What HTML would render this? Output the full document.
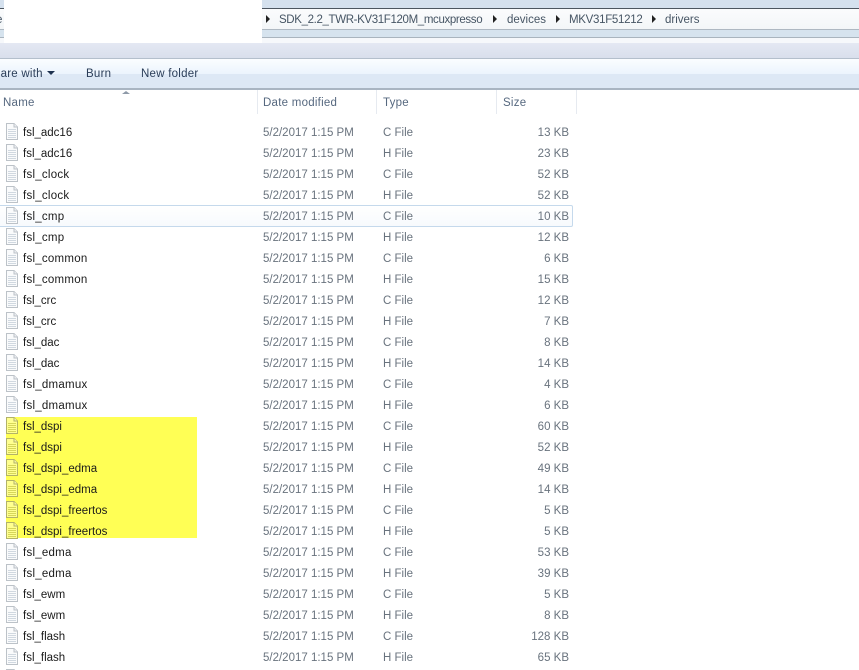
<!DOCTYPE html>
<html lang="en">
<head>
<meta charset="utf-8">
<title>drivers</title>
<style>
html,body{margin:0;padding:0;background:#fff}
#p{position:relative;width:859px;height:670px;overflow:hidden;background:#fff;font-family:"Liberation Sans",sans-serif;font-size:11.5px;color:#000}
#p div,#p span,#p svg{position:absolute}
.t{white-space:nowrap;line-height:14px}
.g{color:#69737e}
.h{color:#56687f;letter-spacing:.25px}
.n{color:#1a1a1a}
.w{letter-spacing:.25px}
.s{width:65px;text-align:right}
.bc{color:#465564;top:13px;font-size:11.5px}
.ar{width:0;height:0;border-left:4px solid #222;border-top:4px solid transparent;border-bottom:4px solid transparent;top:15px}
.sep{top:90px;width:1px;height:24px;background:#e6eaf0}
.tb{color:#2a3d58;letter-spacing:.25px;top:67px}
</style>
</head>
<body>
<div id="p">
<div style="left:0;top:0;width:859px;height:8px;background:#d5e1ee"></div>
<div style="left:0;top:8px;width:859px;height:1px;background:#4d5660"></div>
<div style="left:0;top:9px;width:859px;height:20px;background:linear-gradient(#fbfcfd,#f3f6f8)"></div>
<div style="left:0;top:29px;width:859px;height:1px;background:#aeb8c2"></div>
<div style="left:0;top:30px;width:859px;height:7px;background:#d6e3ee"></div>
<div style="left:0;top:37px;width:859px;height:1px;background:#a9b4be"></div>
<div style="left:0;top:38px;width:859px;height:5px;background:#f6f8fb"></div>
<div style="left:0;top:43px;width:859px;height:15px;background:linear-gradient(#e4e8f3,#d9dfec)"></div>
<div style="left:0;top:58px;width:859px;height:1px;background:#b4bfcc"></div>
<div style="left:0;top:59px;width:859px;height:15px;background:linear-gradient(#fbfdff,#ecf4fd)"></div>
<div style="left:0;top:74px;width:859px;height:14px;background:#dde8f5"></div>
<div style="left:0;top:88px;width:859px;height:2px;background:#a9b5c2"></div>

<div style="left:4px;top:0;width:258px;height:43px;background:#fff"></div>
<div class="t bc" style="left:-4px">e</div>

<div class="ar" style="left:266px"></div>
<div class="t bc" style="left:279px;letter-spacing:-.36px">SDK_2.2_TWR-KV31F120M_mcuxpresso</div>
<div class="ar" style="left:493px"></div>
<div class="t bc" style="left:507px">devices</div>
<div class="ar" style="left:556px"></div>
<div class="t bc" style="left:569px;letter-spacing:-.3px">MKV31F51212</div>
<div class="ar" style="left:652px"></div>
<div class="t bc" style="left:665px">drivers</div>

<div class="t tb" style="left:-14px">Share with</div>
<div style="left:47px;top:71px;width:0;height:0;border-top:4px solid #1e3250;border-left:4px solid transparent;border-right:4px solid transparent"></div>
<div class="t tb" style="left:86px">Burn</div>
<div class="t tb" style="left:141px">New folder</div>

<div style="left:122px;top:91px;width:0;height:0;border-bottom:3px solid #8e9aa8;border-left:4px solid transparent;border-right:4px solid transparent"></div>
<div class="sep" style="left:257px"></div>
<div class="sep" style="left:376px"></div>
<div class="sep" style="left:496px"></div>
<div class="sep" style="left:576px"></div>
<div class="t h" style="left:3px;top:96px">Name</div>
<div class="t h" style="left:263px;top:96px">Date modified</div>
<div class="t h" style="left:383px;top:96px">Type</div>
<div class="t h" style="left:503px;top:96px">Size</div>

<div style="left:0;top:205px;width:572px;height:20px;border:1px solid #c5d9ec;border-left:0;border-radius:0 2px 2px 0;background:linear-gradient(#fff,#f7fafd)"></div>
<div style="left:6px;top:417px;width:191px;height:121px;background:#ffff55"></div>

<svg style="left:0;top:0" width="24" height="690" viewBox="0 0 24 690">
<defs>
<g id="f"><path d="M6.500 .5H14L17.500 4V16.500H6.500Z" fill="#fafbfc" stroke="#bcc2c8"/><path d="M14 .5V4H17.500" fill="#eef0f3" stroke="#bcc2c8"/><path d="M8 6.500H16M8 8.500H16M8 10.500H16M8 12.500H16M8 14.500H16" stroke="#d0d8e0"/></g>
<g id="y"><path d="M6.500 .5H14L17.500 4V16.500H6.500Z" fill="#ffff90" stroke="#b2b268"/><path d="M14 .5V4H17.500" fill="#fafaa8" stroke="#b2b268"/><path d="M8 6.500H16M8 8.500H16M8 10.500H16M8 12.500H16M8 14.500H16" stroke="#d6d65a"/></g>
</defs>
<use href="#f" y="123"/><use href="#f" y="144"/><use href="#f" y="165"/><use href="#f" y="186"/><use href="#f" y="207"/><use href="#f" y="228"/><use href="#f" y="249"/><use href="#f" y="270"/><use href="#f" y="291"/><use href="#f" y="312"/><use href="#f" y="333"/><use href="#f" y="354"/><use href="#f" y="375"/><use href="#f" y="396"/>
<use href="#y" y="417"/><use href="#y" y="438"/><use href="#y" y="459"/><use href="#y" y="480"/><use href="#y" y="501"/><use href="#y" y="522"/>
<use href="#f" y="543"/><use href="#f" y="564"/><use href="#f" y="585"/><use href="#f" y="606"/><use href="#f" y="627"/><use href="#f" y="648"/>
<use href="#f" y="669"/>
</svg>

<div class="t n" style="left:23px;top:126px">fsl_adc16</div><div class="t g" style="left:263px;top:126px">5/2/2017 1:15 PM</div><div class="t g" style="left:383px;top:126px">C File</div><div class="t g s" style="left:504px;top:126px">13 KB</div>
<div class="t n" style="left:23px;top:147px">fsl_adc16</div><div class="t g" style="left:263px;top:147px">5/2/2017 1:15 PM</div><div class="t g" style="left:383px;top:147px">H File</div><div class="t g s" style="left:504px;top:147px">23 KB</div>
<div class="t n w" style="left:23px;top:168px">fsl_clock</div><div class="t g" style="left:263px;top:168px">5/2/2017 1:15 PM</div><div class="t g" style="left:383px;top:168px">C File</div><div class="t g s" style="left:504px;top:168px">52 KB</div>
<div class="t n w" style="left:23px;top:189px">fsl_clock</div><div class="t g" style="left:263px;top:189px">5/2/2017 1:15 PM</div><div class="t g" style="left:383px;top:189px">H File</div><div class="t g s" style="left:504px;top:189px">52 KB</div>
<div class="t n w" style="left:23px;top:210px">fsl_cmp</div><div class="t g" style="left:263px;top:210px">5/2/2017 1:15 PM</div><div class="t g" style="left:383px;top:210px">C File</div><div class="t g s" style="left:504px;top:210px">10 KB</div>
<div class="t n w" style="left:23px;top:231px">fsl_cmp</div><div class="t g" style="left:263px;top:231px">5/2/2017 1:15 PM</div><div class="t g" style="left:383px;top:231px">H File</div><div class="t g s" style="left:504px;top:231px">12 KB</div>
<div class="t n w" style="left:23px;top:252px">fsl_common</div><div class="t g" style="left:263px;top:252px">5/2/2017 1:15 PM</div><div class="t g" style="left:383px;top:252px">C File</div><div class="t g s" style="left:504px;top:252px">6 KB</div>
<div class="t n w" style="left:23px;top:273px">fsl_common</div><div class="t g" style="left:263px;top:273px">5/2/2017 1:15 PM</div><div class="t g" style="left:383px;top:273px">H File</div><div class="t g s" style="left:504px;top:273px">15 KB</div>
<div class="t n" style="left:23px;top:294px">fsl_crc</div><div class="t g" style="left:263px;top:294px">5/2/2017 1:15 PM</div><div class="t g" style="left:383px;top:294px">C File</div><div class="t g s" style="left:504px;top:294px">12 KB</div>
<div class="t n" style="left:23px;top:315px">fsl_crc</div><div class="t g" style="left:263px;top:315px">5/2/2017 1:15 PM</div><div class="t g" style="left:383px;top:315px">H File</div><div class="t g s" style="left:504px;top:315px">7 KB</div>
<div class="t n" style="left:23px;top:336px">fsl_dac</div><div class="t g" style="left:263px;top:336px">5/2/2017 1:15 PM</div><div class="t g" style="left:383px;top:336px">C File</div><div class="t g s" style="left:504px;top:336px">8 KB</div>
<div class="t n" style="left:23px;top:357px">fsl_dac</div><div class="t g" style="left:263px;top:357px">5/2/2017 1:15 PM</div><div class="t g" style="left:383px;top:357px">H File</div><div class="t g s" style="left:504px;top:357px">14 KB</div>
<div class="t n w" style="left:23px;top:378px">fsl_dmamux</div><div class="t g" style="left:263px;top:378px">5/2/2017 1:15 PM</div><div class="t g" style="left:383px;top:378px">C File</div><div class="t g s" style="left:504px;top:378px">4 KB</div>
<div class="t n w" style="left:23px;top:399px">fsl_dmamux</div><div class="t g" style="left:263px;top:399px">5/2/2017 1:15 PM</div><div class="t g" style="left:383px;top:399px">H File</div><div class="t g s" style="left:504px;top:399px">6 KB</div>
<div class="t n" style="left:23px;top:420px">fsl_dspi</div><div class="t g" style="left:263px;top:420px">5/2/2017 1:15 PM</div><div class="t g" style="left:383px;top:420px">C File</div><div class="t g s" style="left:504px;top:420px">60 KB</div>
<div class="t n" style="left:23px;top:441px">fsl_dspi</div><div class="t g" style="left:263px;top:441px">5/2/2017 1:15 PM</div><div class="t g" style="left:383px;top:441px">H File</div><div class="t g s" style="left:504px;top:441px">52 KB</div>
<div class="t n" style="left:23px;top:462px">fsl_dspi_edma</div><div class="t g" style="left:263px;top:462px">5/2/2017 1:15 PM</div><div class="t g" style="left:383px;top:462px">C File</div><div class="t g s" style="left:504px;top:462px">49 KB</div>
<div class="t n" style="left:23px;top:483px">fsl_dspi_edma</div><div class="t g" style="left:263px;top:483px">5/2/2017 1:15 PM</div><div class="t g" style="left:383px;top:483px">H File</div><div class="t g s" style="left:504px;top:483px">14 KB</div>
<div class="t n" style="left:23px;top:504px">fsl_dspi_freertos</div><div class="t g" style="left:263px;top:504px">5/2/2017 1:15 PM</div><div class="t g" style="left:383px;top:504px">C File</div><div class="t g s" style="left:504px;top:504px">5 KB</div>
<div class="t n" style="left:23px;top:525px">fsl_dspi_freertos</div><div class="t g" style="left:263px;top:525px">5/2/2017 1:15 PM</div><div class="t g" style="left:383px;top:525px">H File</div><div class="t g s" style="left:504px;top:525px">5 KB</div>
<div class="t n w" style="left:23px;top:546px">fsl_edma</div><div class="t g" style="left:263px;top:546px">5/2/2017 1:15 PM</div><div class="t g" style="left:383px;top:546px">C File</div><div class="t g s" style="left:504px;top:546px">53 KB</div>
<div class="t n w" style="left:23px;top:567px">fsl_edma</div><div class="t g" style="left:263px;top:567px">5/2/2017 1:15 PM</div><div class="t g" style="left:383px;top:567px">H File</div><div class="t g s" style="left:504px;top:567px">39 KB</div>
<div class="t n" style="left:23px;top:588px">fsl_ewm</div><div class="t g" style="left:263px;top:588px">5/2/2017 1:15 PM</div><div class="t g" style="left:383px;top:588px">C File</div><div class="t g s" style="left:504px;top:588px">5 KB</div>
<div class="t n" style="left:23px;top:609px">fsl_ewm</div><div class="t g" style="left:263px;top:609px">5/2/2017 1:15 PM</div><div class="t g" style="left:383px;top:609px">H File</div><div class="t g s" style="left:504px;top:609px">8 KB</div>
<div class="t n" style="left:23px;top:630px">fsl_flash</div><div class="t g" style="left:263px;top:630px">5/2/2017 1:15 PM</div><div class="t g" style="left:383px;top:630px">C File</div><div class="t g s" style="left:504px;top:630px">128 KB</div>
<div class="t n" style="left:23px;top:651px">fsl_flash</div><div class="t g" style="left:263px;top:651px">5/2/2017 1:15 PM</div><div class="t g" style="left:383px;top:651px">H File</div><div class="t g s" style="left:504px;top:651px">65 KB</div>
</div>
</body>
</html>
